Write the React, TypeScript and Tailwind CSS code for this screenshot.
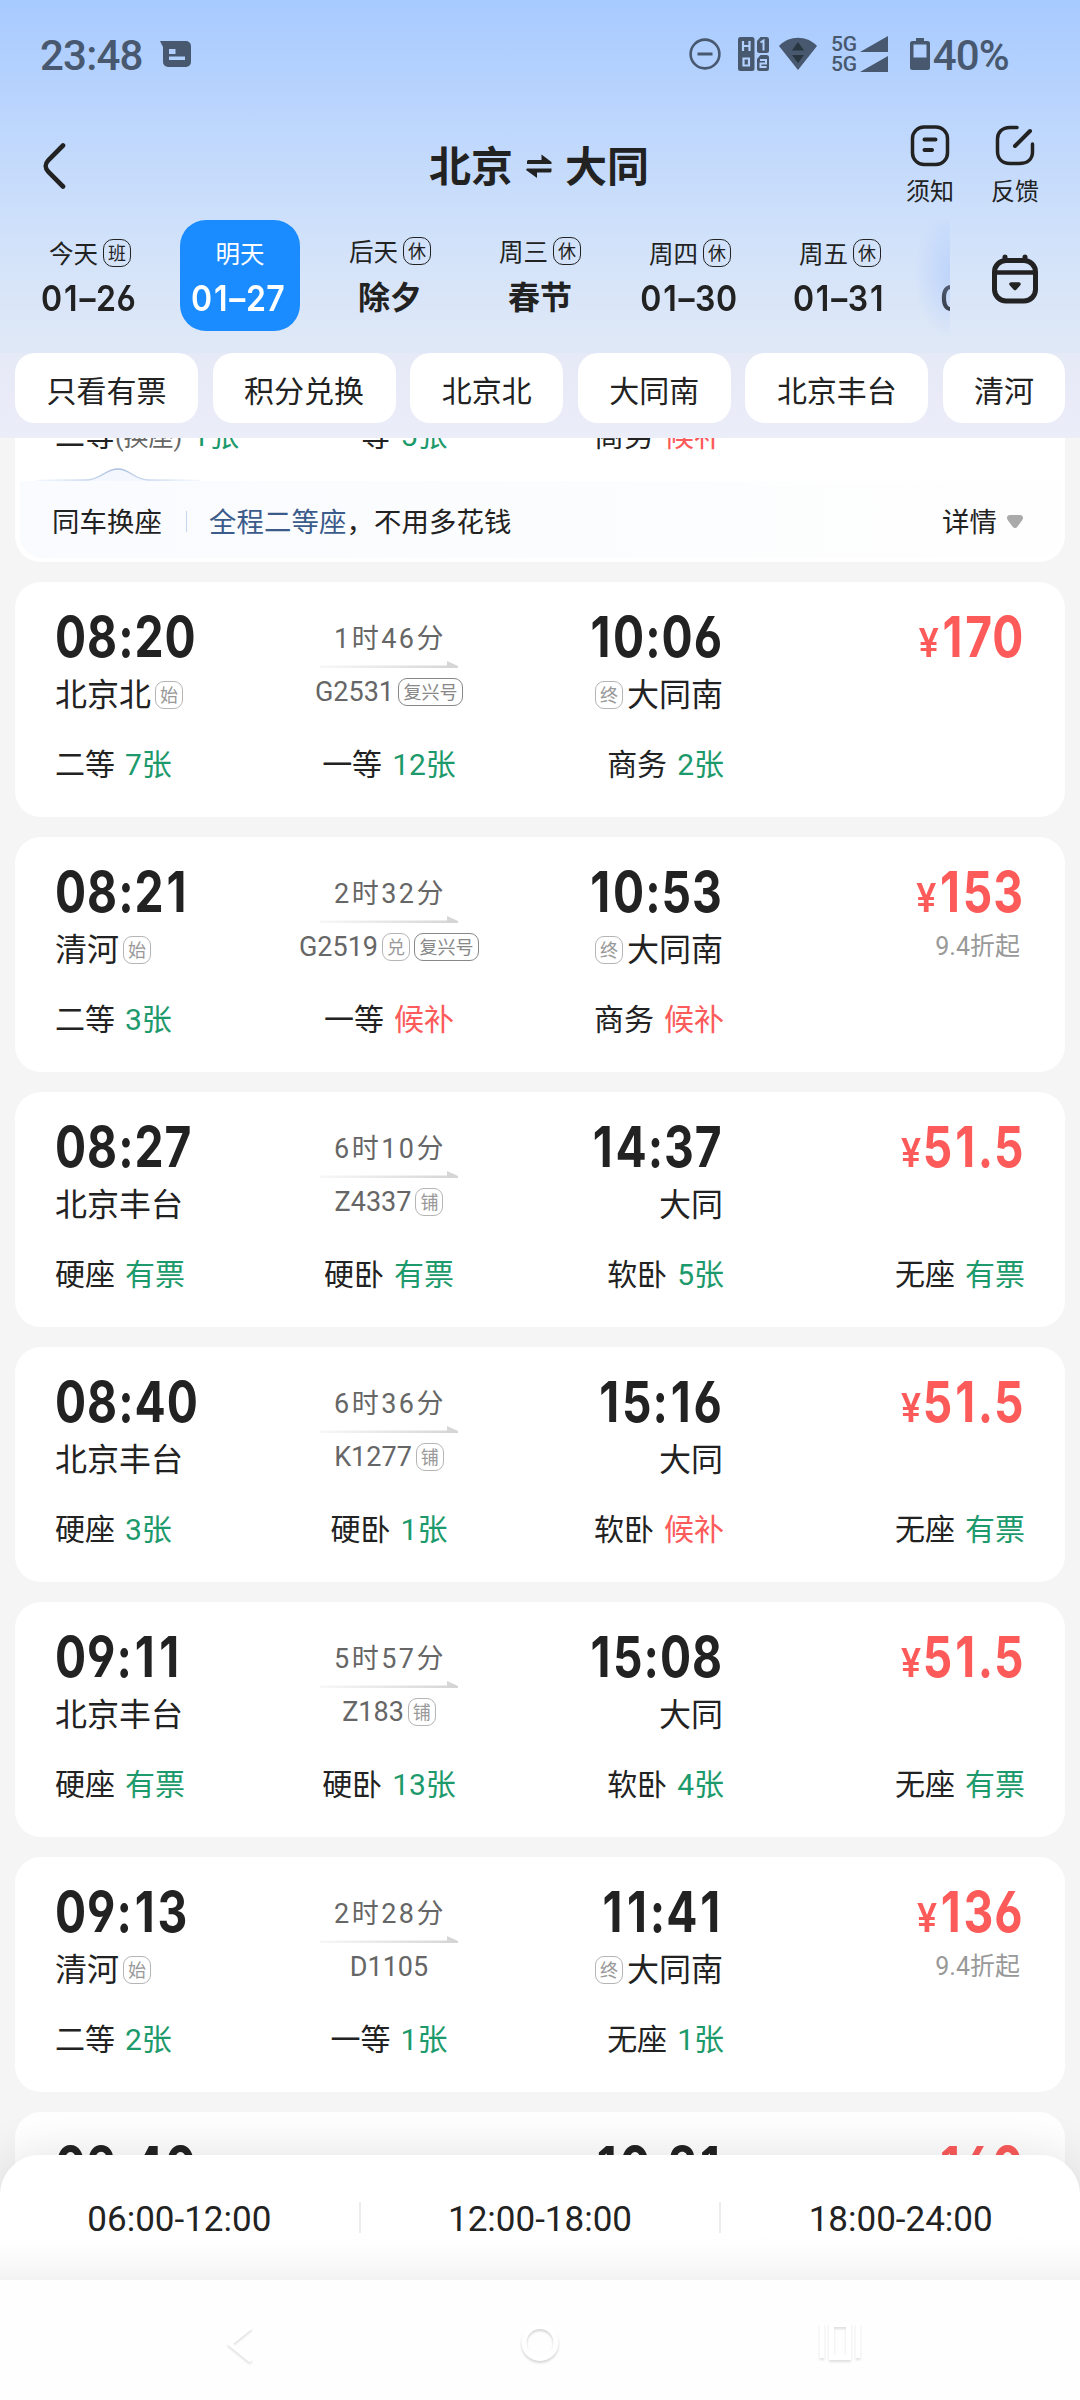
import React from "react";

const CJK = "font-['Roboto','Noto_Sans_CJK_SC',sans-serif]";
const DIN = "font-['Inter','Noto_Sans_CJK_SC',sans-serif] [font-feature-settings:'cv03','cv04']";

type Seat = { name: string; note?: string; left: string };
type Train = {
  dep: string;
  arr: string;
  from: string;
  to: string;
  start?: boolean;
  end?: boolean;
  duration: string;
  no: string;
  tags: string[];
  price: string;
  discount?: string;
  seats: Seat[];
};

const trains: Train[] = [
  {
    dep: "08:20", arr: "10:06", from: "北京北", to: "大同南", start: true, end: true,
    duration: "1时46分", no: "G2531", tags: ["复兴号"], price: "170",
    seats: [{ name: "二等", left: "7张" }, { name: "一等", left: "12张" }, { name: "商务", left: "2张" }],
  },
  {
    dep: "08:21", arr: "10:53", from: "清河", to: "大同南", start: true, end: true,
    duration: "2时32分", no: "G2519", tags: ["兑", "复兴号"], price: "153", discount: "9.4折起",
    seats: [{ name: "二等", left: "3张" }, { name: "一等", left: "候补" }, { name: "商务", left: "候补" }],
  },
  {
    dep: "08:27", arr: "14:37", from: "北京丰台", to: "大同",
    duration: "6时10分", no: "Z4337", tags: ["铺"], price: "51.5",
    seats: [{ name: "硬座", left: "有票" }, { name: "硬卧", left: "有票" }, { name: "软卧", left: "5张" }, { name: "无座", left: "有票" }],
  },
  {
    dep: "08:40", arr: "15:16", from: "北京丰台", to: "大同",
    duration: "6时36分", no: "K1277", tags: ["铺"], price: "51.5",
    seats: [{ name: "硬座", left: "3张" }, { name: "硬卧", left: "1张" }, { name: "软卧", left: "候补" }, { name: "无座", left: "有票" }],
  },
  {
    dep: "09:11", arr: "15:08", from: "北京丰台", to: "大同",
    duration: "5时57分", no: "Z183", tags: ["铺"], price: "51.5",
    seats: [{ name: "硬座", left: "有票" }, { name: "硬卧", left: "13张" }, { name: "软卧", left: "4张" }, { name: "无座", left: "有票" }],
  },
  {
    dep: "09:13", arr: "11:41", from: "清河", to: "大同南", start: true, end: true,
    duration: "2时28分", no: "D1105", tags: [], price: "136", discount: "9.4折起",
    seats: [{ name: "二等", left: "2张" }, { name: "一等", left: "1张" }, { name: "无座", left: "1张" }],
  },
];

/* Numerals with a little extra room around the narrow "1". */
function Digits({ children }: { children: string }) {
  return (
    <>
      {children.split(/(1)/).map((part, i) =>
        part === "1" ? (
          <span key={i} className="mx-[0.04em]">1</span>
        ) : (
          part
        )
      )}
    </>
  );
}

function StatusBar() {
  return (
    <div className="flex h-[112px] items-center justify-between pl-[40px] pr-[71px] text-[#47586f]">
      <div className="flex items-center">
        <span className="text-[42px] font-medium leading-[48px] tracking-[-0.8px]">23:48</span>
        <svg className="mb-[4px] ml-[17px]" width="31" height="26" viewBox="0 0 31 26" fill="currentColor">
          <path fillRule="evenodd" d="M0 0H26a5 5 0 0 1 5 5V21a5 5 0 0 1-5 5H8a5 5 0 0 1-5-5V6ZM9 8V13H15.500V8ZM9 15.500V19H25V15.500Z" />
        </svg>
      </div>
      <div className="flex items-center">
        <svg className="mb-[5px]" width="32" height="32" viewBox="0 0 32 32" fill="none" stroke="currentColor" strokeWidth="2.600">
          <circle cx="16" cy="16" r="14.400" />
          <path d="M8.500 16H23.500" strokeWidth="3" />
        </svg>
        <svg className="mb-[4px] ml-[17px]" width="31" height="34" viewBox="0 0 31 34" fill="none" stroke="currentColor">
          <rect x="0" y="0" width="16.500" height="34" rx="2.500" fill="currentColor" stroke="none" />
          <g stroke="#b2d0fd" strokeWidth="2.200">
            <path d="M5 4V14M11.500 4V14M5 9H11.500" />
            <path d="M5.500 21.500H11V28.500H5.500Z" />
          </g>
          <path d="M22.500 0H28.500a2.500 2.500 0 0 1 2.500 2.500V13.500a2.500 2.500 0 0 1-2.500 2.500H21.500a2.500 2.500 0 0 1-2.500-2.500V4Z" fill="currentColor" stroke="none" />
          <path d="M22.500 18H28.500a2.500 2.500 0 0 1 2.500 2.500V31.500a2.500 2.500 0 0 1-2.500 2.500H21.500a2.500 2.500 0 0 1-2.500-2.500V22Z" fill="currentColor" stroke="none" />
          <g stroke="#b2d0fd" strokeWidth="2">
            <path d="M22.500 5.500L25.500 3.500V13.500" />
            <path d="M22 23H28V26.500H22.500V30H28.500" />
          </g>
        </svg>
        <svg className="mb-[5px] ml-[10px]" width="38" height="33" viewBox="0 0 38 33">
          <path d="M0 9C10-2 28-2 38 9L19 33Z" fill="currentColor" />
          <path d="M19 5L25 13.500H13ZM13 18H25L19 26Z" fill="#27353f" />
        </svg>
        <div className="mb-[4px] ml-[14px] flex flex-col text-[21px] font-medium leading-[20px] tracking-[-0.3px]">
          <span>5G</span>
          <span>5G</span>
        </div>
        <svg className="mb-[5px] ml-[3px]" width="28" height="36" viewBox="0 0 28 36" fill="currentColor">
          <path d="M28 0V16H0ZM28 20V36H0Z" />
        </svg>
        <svg className="mb-[5px] ml-[22px]" width="20" height="32" viewBox="0 0 20 32" fill="none">
          <path fillRule="evenodd" fill="currentColor" d="M6 0H14V3H17.500a2.500 2.500 0 0 1 2.500 2.500V29.500a2.500 2.500 0 0 1-2.500 2.500H2.500a2.500 2.500 0 0 1-2.500-2.500V5.500a2.500 2.500 0 0 1 2.500-2.500H6ZM3.500 6.500V19.500H16.500V6.500Z" />
        </svg>
        <span className="ml-[3px] text-[42px] font-medium leading-[48px] tracking-[-0.8px]">40%</span>
      </div>
    </div>
  );
}

function TitleBar() {
  return (
    <div className="flex h-[108px] justify-between pl-[42px] pr-[41px]">
      <svg className="mt-[30px]" width="24" height="48" viewBox="0 0 24 48" fill="none" stroke="#222" strokeWidth="4.600" strokeLinecap="round">
        <path d="M21 3.500L6.500 18C2.500 22.500 2.500 25.500 6.500 30L21 44.500" />
      </svg>
      <div className="ml-[106px] mt-[29px] flex h-[54px] items-center text-[42px] font-bold leading-[54px] text-[#222]">
        <span>北京</span>
        <svg className="mx-[13px] mb-[4px]" width="26" height="24" viewBox="0 0 26 24" fill="#222">
          <path d="M2 6H15.500V0.500L25.500 8V10H1V7ZM1 14.500H25.500V17.500L24.500 18.500H11V24L0 16Z" />
        </svg>
        <span>大同</span>
      </div>
      <div className="flex gap-[37px] pt-[13px] text-[24px] leading-[34px] text-[#222]">
        <div className="flex flex-col items-center">
          <svg width="40" height="42" viewBox="0 0 40 42" fill="none" stroke="#222" strokeWidth="3.500" strokeLinecap="round">
            <rect x="2.500" y="2" width="35" height="37.500" rx="11.500" />
            <path d="M14.500 14.500H25.500M14.500 25H22" strokeWidth="4" />
          </svg>
          <span className="mt-[8px]">须知</span>
        </div>
        <div className="flex flex-col items-center">
          <svg width="40" height="42" viewBox="0 0 40 42" fill="none" stroke="#222" strokeWidth="3.500" strokeLinecap="round">
            <path d="M22 2.500H15C7 2.500 2.500 7.500 2.500 14V26C2.500 33.500 7 38.500 15 38.500H24C33 38.500 37.500 33.500 37.500 27V19" />
            <path d="M35 6L20 21" strokeWidth="4" />
          </svg>
          <span className="mt-[8px]">反馈</span>
        </div>
      </div>
    </div>
  );
}

const days = [
  { label: "今天", tag: "班", date: "01-26" },
  { label: "明天", date: "01-27", active: true },
  { label: "后天", tag: "休", date: "除夕", text: true },
  { label: "周三", tag: "休", date: "春节", text: true },
  { label: "周四", tag: "休", date: "01-30" },
  { label: "周五", tag: "休", date: "01-31" },
  { label: "", date: "02-01" },
];

function DateStrip() {
  return (
    <div className="flex h-[133px] text-[#222]">
      <div className="relative flex w-[950px] overflow-hidden pl-[15px]">
        {days.map((d) => (
          <div key={d.date} className="flex w-[150px] shrink-0 justify-center">
            <div className={"flex h-[111px] w-[120px] flex-col items-center rounded-[26px] " + (d.active ? "bg-[#1a8cff] text-white" : "")}>
              <div className={"flex h-[30px] shrink-0 items-center gap-[5px] text-[24.500px] leading-[30px] " + (d.text ? "mt-[18px]" : "mt-[20px]")}>
                <span>{d.label}</span>
                {d.tag && (
                  <span className="mb-[5px] flex h-[28px] w-[28px] items-center justify-center rounded-[10px] border border-[#222] pt-[2px] text-[18px] leading-[26px]">
                    {d.tag}
                  </span>
                )}
              </div>
              {d.text ? (
                <div className="mt-[10px] whitespace-nowrap text-[32px] font-bold leading-[40px]">{d.date}</div>
              ) : (
                <div className={"mt-[8px] flex w-[120px] justify-center whitespace-nowrap text-[36px] font-semibold leading-[40px] " + DIN}>
                  <span className="mx-[-10px] scale-x-[0.89] pr-[3px] tracking-[0.6px]">
                    <Digits>{d.date.replace("-", "–")}</Digits>
                  </span>
                </div>
              )}
            </div>
          </div>
        ))}
        <div className="absolute bottom-[14px] right-0 top-0 w-[36px] bg-[radial-gradient(ellipse_36px_64px_at_100%_45%,rgba(160,192,252,0.45),rgba(160,192,252,0))]" />
      </div>
      <div className="flex flex-1 justify-center pt-[33px]">
        <svg width="46" height="51" viewBox="0 0 46 51" fill="none" stroke="#222" strokeWidth="5" strokeLinecap="round">
          <rect x="2.500" y="7.500" width="41" height="40.500" rx="11.500" />
          <path d="M3 19.500H43" strokeWidth="4.500" strokeLinecap="butt" />
          <path d="M13 4V7M33 4V7" />
          <path d="M19 31H27L23 35.500Z" fill="#222" strokeWidth="3.500" strokeLinejoin="round" />
        </svg>
      </div>
    </div>
  );
}

const chips = [
  ["只看有票", "w-[183px]"],
  ["积分兑换", "w-[183px]"],
  ["北京北", "w-[153px]"],
  ["大同南", "w-[153px]"],
  ["北京丰台", "w-[183px]"],
  ["清河", "w-[122px]"],
];

function Chips() {
  return (
    <div className="flex h-[85px] justify-between bg-linear-to-b from-[#e6e9f6] to-[#ebedf9] px-[15px]">
      {chips.map(([label, width]) => (
        <div key={label} className={"flex h-[70px] items-center justify-center rounded-[20px] bg-white pt-[7px] text-[30px] leading-[44px] text-[#222] " + width}>
          {label}
        </div>
      ))}
    </div>
  );
}

function Tag({ children, dark }: { children: React.ReactNode; dark?: boolean }) {
  return (
    <span
      className={
        "flex h-[28px] min-w-[28px] items-center justify-center rounded-[9px] border pt-px text-[18px] leading-[26px] " +
        (dark ? "border-[#888] px-[4.500px] text-[#888]" : "border-[#b5b5b5] px-[4px] text-[#999]")
      }
    >
      {children}
    </span>
  );
}

const columns = "grid grid-cols-[223px_222px_224px_301px] pl-[40px]";

function Seats({ seats }: { seats: Seat[] }) {
  const align = ["justify-start", "justify-center", "justify-end", "justify-end"];
  return (
    <div className={columns}>
      {seats.map((s, i) => (
        <div key={s.name} className={"flex items-baseline whitespace-nowrap text-[30px] leading-[40px] text-[#222] " + align[i]}>
          <span>{s.name}</span>
          {s.note && <span className="text-[25px] text-[#666]">{s.note}</span>}
          <span className={"ml-[10px] " + (s.left === "候补" ? "text-[#fc5b5a]" : "text-[#1d9a6c]")}>{s.left}</span>
        </div>
      ))}
    </div>
  );
}

function Arrow() {
  return (
    <svg className="mt-[5px]" width="138" height="7" viewBox="0 0 138 7">
      <defs>
        <linearGradient id="arrow-fade" x1="0" x2="1">
          <stop offset="0" stopColor="#d8d8d8" stopOpacity="0.2" />
          <stop offset="1" stopColor="#d4d4d4" />
        </linearGradient>
      </defs>
      <path d="M0 4.500H127V0L138 5V7H0Z" fill="url(#arrow-fade)" />
    </svg>
  );
}

const timeText = "text-[57px] font-bold leading-[48px] text-[#222] whitespace-nowrap scale-x-[0.81] tracking-[1.200px] " + DIN;

function Price({ children }: { children: string }) {
  return (
    <div className={"mr-px flex h-[48px] origin-right scale-x-[0.81] items-baseline whitespace-nowrap font-bold leading-[48px] text-[#fc5b5a] " + DIN}>
      <span className="mr-[2px] origin-right scale-x-[1.15] text-[39px] font-semibold">¥</span>
      <span className="text-[57px] tracking-[1.200px]">
        <Digits>{children}</Digits>
      </span>
    </div>
  );
}

function TrainCard({ t }: { t: Train }) {
  return (
    <div className="h-[235px] shrink-0 rounded-[26px] bg-white pt-[31px]">
      <div className={columns + " h-[132px]"}>
        <div>
          <div className={timeText + " origin-left"}>
            <Digits>{t.dep}</Digits>
          </div>
          <div className="mt-[14px] flex items-center gap-[4px] text-[32px] leading-[40px] text-[#222]">
            <span>{t.from}</span>
            {t.start && <Tag>始</Tag>}
          </div>
        </div>
        <div className="flex flex-col items-center pt-[7px]">
          <div className="mr-[-2px] mt-px h-[35px] text-[27px] leading-[36px] tracking-[2.500px] text-[#666]">{t.duration}</div>
          <Arrow />
          <div className="mt-[6px] flex items-center gap-[4px] text-[27px] leading-[36px] text-[#666]">
            <span className="whitespace-nowrap">{t.no}</span>
            {t.tags.map((g) => (
              <Tag key={g} dark={g.length > 1}>{g}</Tag>
            ))}
          </div>
        </div>
        <div className="flex flex-col items-end">
          <div className={timeText + " mr-px origin-right"}>
            <Digits>{t.arr}</Digits>
          </div>
          <div className="mr-px mt-[14px] flex items-center gap-[4px] text-[32px] leading-[40px] text-[#222]">
            {t.end && <Tag>终</Tag>}
            <span>{t.to}</span>
          </div>
        </div>
        <div className="flex flex-col items-end">
          <Price>{t.price}</Price>
          {t.discount && <div className="mr-[5px] mt-[13px] text-[25px] leading-[36px] text-[#999]">{t.discount}</div>}
        </div>
      </div>
      <Seats seats={t.seats} />
    </div>
  );
}

/* The next train, of which only the top edge shows above the time filter. */
function PeekCard() {
  return (
    <div className="h-[90px] shrink-0 rounded-t-[26px] bg-white pt-[31px]">
      <div className={columns}>
        <div className={timeText + " origin-left"}>
          <Digits>09:40</Digits>
        </div>
        <div />
        <div className="flex justify-end">
          <div className={timeText + " mr-px origin-right"}>
            <Digits>10:21</Digits>
          </div>
        </div>
        <div className="flex justify-end">
          <Price>160</Price>
        </div>
      </div>
    </div>
  );
}

function SwapCard() {
  return (
    <div className="flex h-[144px] shrink-0 flex-col rounded-b-[26px] bg-white">
      <div className="-mt-[2px]">
        <Seats
          seats={[
            { name: "二等", note: "(换座)", left: "1张" },
            { name: "一等", left: "5张" },
            { name: "商务", left: "候补" },
          ]}
        />
      </div>
      <svg className="ml-[20px] mt-[10px] shrink-0" width="165" height="13" viewBox="0 0 165 13" fill="none">
        <defs>
          <linearGradient id="wave-fade" gradientUnits="userSpaceOnUse" x1="0" x2="165" y1="0" y2="0">
            <stop offset="0" stopColor="#b4cdea" stopOpacity="0" />
            <stop offset="0.500" stopColor="#a9bfe0" />
            <stop offset="1" stopColor="#b4cdea" stopOpacity="0" />
          </linearGradient>
        </defs>
        <path d="M0 12H50C66 12 70 1 83 1C96 1 98 12 114 12H165V13H0Z" fill="#f4f8fe" />
        <path d="M0 12H50C66 12 70 1 83 1C96 1 98 12 114 12H165" stroke="url(#wave-fade)" strokeWidth="1.300" />
      </svg>
      <div className="mx-[5px] flex h-[77px] items-center rounded-b-[22px] bg-linear-to-r from-[#f9fbfe] to-[#fefefe] pl-[32px] pr-[37px] text-[27.400px] leading-[36px] tracking-[0.1px] text-[#222]">
        <span className="mt-[6px]">同车换座</span>
        <span className="ml-[24px] mt-[3px] h-[21px] w-px bg-[#c3d6ee]" />
        <span className="ml-[22px] mt-[6px] text-[#3b5b8b]">全程二等座</span>
        <span className="mt-[6px]">，不用多花钱</span>
        <span className="ml-auto mt-[6px]">详情</span>
        <svg className="ml-[10px] mt-[3px]" width="16" height="13" viewBox="0 0 16 13" fill="#aaa">
          <path d="M3 0H13C16 0 17 3 15 5.500L10.500 11.500C9 13.500 7 13.500 5.500 11.500L1 5.500C-1 3 0 0 3 0Z" />
        </svg>
      </div>
    </div>
  );
}

function NavBar() {
  return (
    <div className="flex h-[120px] items-start bg-[#fefefe] pl-[224px] pt-[43px]">
      <svg className="drop-shadow-[0_2px_1px_rgba(0,0,0,0.12)]" width="28" height="40" viewBox="0 0 28 40" fill="none" stroke="#fff" strokeWidth="4">
        <path d="M27 4L6 21L27 38" />
      </svg>
      <svg className="ml-[267px] drop-shadow-[0_2px_1px_rgba(0,0,0,0.16)]" width="42" height="42" viewBox="0 0 42 42" fill="none" stroke="#fff" strokeWidth="5">
        <circle cx="21" cy="19.500" r="16" />
      </svg>
      <svg className="ml-[257px] drop-shadow-[0_2px_1px_rgba(0,0,0,0.12)]" width="44" height="40" viewBox="0 0 44 40" fill="none" stroke="#fff" strokeWidth="5">
        <path d="M4 0V35M40 0V35M13.500 1.500H30.500V34.500H13.500Z" />
      </svg>
    </div>
  );
}

export default function App() {
  return (
    <div className={"flex h-[2400px] w-[1080px] flex-col overflow-hidden bg-[#f5f5f5] " + CJK}>
      <header className="h-[438px] shrink-0 bg-[linear-gradient(180deg,#a7caff_0px,#b9d4fd_100px,#ccdffb_210px,#d6e4f9_270px,#dfe8f6_353px)]">
        <StatusBar />
        <TitleBar />
        <DateStrip />
        <Chips />
      </header>
      <main className="relative h-[1842px] shrink-0 overflow-hidden px-[15px]">
        <div className="-mt-[20px] flex flex-col gap-[20px]">
          <SwapCard />
          {trains.map((t) => (
            <TrainCard key={t.dep} t={t} />
          ))}
          <PeekCard />
        </div>
        <div className="absolute bottom-0 left-0 flex h-[125px] w-[1080px] items-center rounded-t-[40px] bg-[linear-gradient(180deg,#fff_65%,#fafafa_85%,#f3f3f3)] pt-[4px] text-[35px] leading-[40px] text-[#222] shadow-[0_0_50px_rgba(0,0,0,0.12)]">
          <span className="flex-1 text-center">06:00-12:00</span>
          <span className="mb-[4px] h-[31px] w-[2px] bg-[#ececec]" />
          <span className="flex-1 text-center">12:00-18:00</span>
          <span className="mb-[4px] h-[31px] w-[2px] bg-[#ececec]" />
          <span className="flex-1 text-center">18:00-24:00</span>
        </div>
      </main>
      <NavBar />
    </div>
  );
}
